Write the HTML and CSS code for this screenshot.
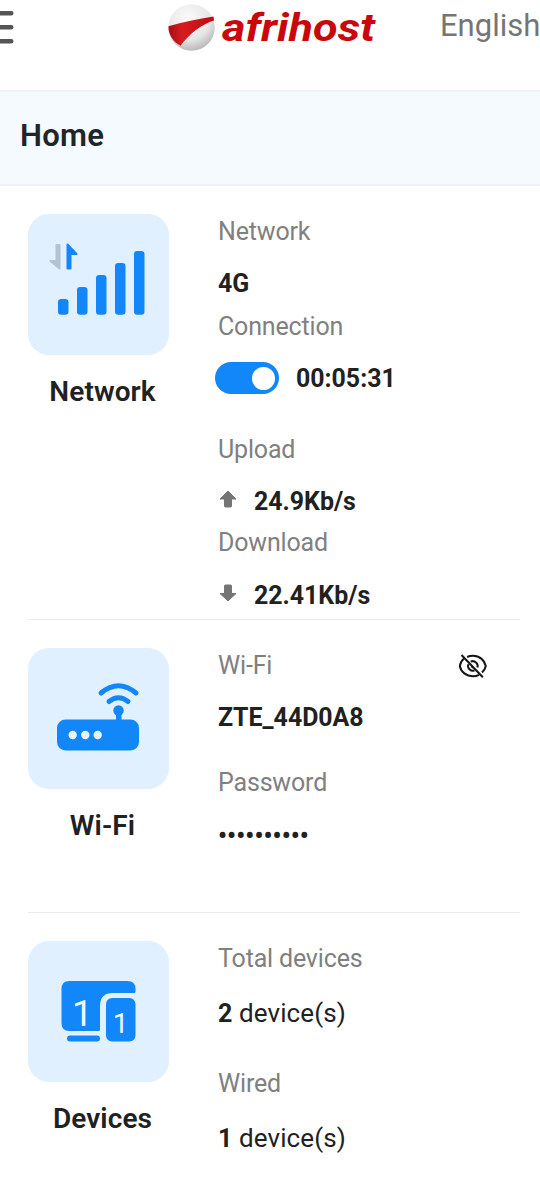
FILE: index.html
```html
<!DOCTYPE html>
<html lang="en">
<head>
<meta charset="utf-8">
<meta name="viewport" content="width=device-width">
<title>Home</title>
<link rel="stylesheet" href="styles.css">
</head>
<body>
<header class="topbar">
  <svg class="menu" width="14" height="50" viewBox="0 0 14 50"><path d="M-8 13.2H11.2M-8 27.2H11.2M-8 41.2H11.2" stroke="#555" stroke-width="4.6" stroke-linecap="round"/></svg>
  <svg class="logo" width="214" height="60" viewBox="0 0 214 60">
    <defs>
      <radialGradient id="ball" cx=".42" cy=".28" r=".75"><stop offset="0" stop-color="#fafafa"/><stop offset=".65" stop-color="#e6e6e6"/><stop offset="1" stop-color="#b5b5b5"/></radialGradient>
      <linearGradient id="band" x1="0" x2="1" y1="0" y2="0"><stop offset="0" stop-color="#a90d12"/><stop offset=".3" stop-color="#d51d20"/><stop offset="1" stop-color="#c00a10"/></linearGradient>
    </defs>
    <circle cx="25.5" cy="27.5" r="23.2" fill="url(#ball)"/>
    <path d="M2.500 26.300C17 22 32 19 47.500 16.500L48 20.500C36 24 24 33 14.500 45.700C7 42 2 34 2.500 26.300Z" fill="url(#band)"/>
    <text class="wordmark" x="56" y="41" textLength="153" lengthAdjust="spacingAndGlyphs">afrihost</text>
  </svg>
  <span class="language">English</span>
</header>
<h1 class="title">Home</h1>
<main>
  <section class="card network">
    <div class="side">
      <svg class="tile" viewBox="0 0 141 141" fill="#1287fa">
        <g stroke-linejoin="round" stroke-width="2">
          <path d="M28.500 31h3v23.500l-9-7.500h6z" fill="#b5c2cf" stroke="#b5c2cf"/>
          <path d="M42.500 54.500h-3V30.500l9 9.500h-6z" stroke="#1287fa"/>
        </g>
        <rect x="30" y="85" width="10.500" height="15.700" rx="3.300"/><rect x="49" y="73" width="10.500" height="27.700" rx="3.300"/><rect x="68" y="61" width="10.500" height="39.700" rx="3.300"/><rect x="87" y="49" width="10.500" height="51.700" rx="3.300"/><rect x="106" y="37" width="10.500" height="63.700" rx="3.300"/>
      </svg>
      <h2>Network</h2>
    </div>
    <dl>
      <dt>Network</dt><dd>4G</dd>
      <dt>Connection</dt><dd class="row"><span class="switch"><span class="knob"></span></span><span class="time">00:05:31</span></dd>
      <dt class="upload">Upload</dt><dd class="row"><svg class="arrow" width="18" height="20" viewBox="0 0 18 20"><path d="M9 2L17 10H12.500V17Q12.500 18 11.500 18H6.500Q5.500 18 5.500 17V10H1Z"/></svg><span>24.9Kb/s</span></dd>
      <dt class="download">Download</dt><dd class="row"><svg class="arrow" width="18" height="20" viewBox="0 0 18 20"><path d="M9 18L1 10.500H5.500V3Q5.500 2 6.500 2H11.500Q12.500 2 12.500 3V10.500H17Z"/></svg><span>22.41Kb/s</span></dd>
    </dl>
  </section>
  <section class="card wifi">
    <div class="side">
      <svg class="tile" viewBox="0 0 141 141" fill="#1287fa">
        <rect x="29" y="71.500" width="82" height="31" rx="8.500"/><circle cx="90.500" cy="62.500" r="5.200"/><path d="M88 65h5.500v9H88z"/>
        <path d="M73 45Q90.500 30.500 108 45M81 53.500Q90.500 46 100 53.500" fill="none" stroke="#1287fa" stroke-width="5" stroke-linecap="round"/>
        <g fill="#e8f5ff"><circle cx="44.700" cy="87" r="4.200"/><circle cx="57.300" cy="87" r="4.200"/><circle cx="69.700" cy="87" r="4.200"/></g>
      </svg>
      <h2>Wi-Fi</h2>
    </div>
    <dl>
      <dt class="between">Wi-Fi<svg class="eye" width="30" height="26" viewBox="0 0 30 26" fill="none" stroke="#151515" stroke-width="2"><path d="M9.200 4C11 3.100 13 2.800 15 2.800C21.500 2.800 26.500 7 27.800 13C27.200 15.800 25.800 18 24 19.600M6 5.600C3.700 7.500 2.200 10 1.800 13C3 19 8.300 23.200 15 23.200C17.200 23.200 19.200 22.700 21 21.800"/><path d="M12.700 8.600A5 5 0 0 1 19.500 14.500M10.300 11.300A5 5 0 0 0 16.500 17.600M3.500 2L24.800 24.200M14.200 12.200A1.200 1.200 0 0 0 15.800 14"/></svg></dt><dd>ZTE_44D0A8</dd>
      <dt class="password">Password</dt><dd class="dots">••••••••••</dd>
    </dl>
  </section>
  <section class="card devices">
    <div class="side">
      <svg class="tile" viewBox="0 0 141 141" fill="#1287fa">
        <path d="M41.500 40H99.500Q107.500 40 107.500 48V50.500Q107.500 52 106 52H85Q72 52 72 65V88.500Q72 90 70.500 90H41.500Q33.500 90 33.500 82V48Q33.500 40 41.500 40Z"/><rect x="39" y="94.500" width="33" height="6" rx="3"/><rect x="78" y="57" width="29.500" height="43.500" rx="6"/>
        <g class="count"><text x="44" y="84.500" font-size="37">1</text><text x="84.700" y="92" font-size="28">1</text></g>
      </svg>
      <h2>Devices</h2>
    </div>
    <dl>
      <dt>Total devices</dt><dd class="count-line"><b>2</b> device(s)</dd>
      <dt class="wired">Wired</dt><dd class="count-line"><b>1</b> device(s)</dd>
    </dl>
  </section>
</main>
</body>
</html>
```
FILE: styles.css
```css
* { box-sizing: border-box; }
body { margin: 0; height: 1199px; overflow: hidden; background: #fff; color: #212121; font-family: Roboto, "Liberation Sans", sans-serif; }
.topbar { display: flex; align-items: flex-start; height: 90px; overflow: hidden; }
.menu { flex: none; width: 14px; margin-right: 152px; }
.logo { flex: none; margin-right: 60px; }
.wordmark { fill: #c9080e; font: italic 700 39px Roboto, sans-serif; }
.language { padding-top: 7px; color: #757575; font-size: 31px; line-height: 38px; }
.title { display: flex; align-items: center; height: 96px; margin: 0; padding: 0 20px 4px; border-top: 2px solid #edf2fb; border-bottom: 2px solid #edf2fa; background: #f4faff; color: #20252a; font-size: 31px; line-height: 38px; font-weight: 600; letter-spacing: .3px; }
.card { display: flex; margin: 0 20px 0 28px; border-bottom: 1px solid #ebebeb; }
.network { height: 434px; padding-top: 28px; }
.wifi { height: 293px; padding-top: 28px; }
.devices { height: 286px; padding-top: 28px; border: 0; }
.side { display: flex; flex-direction: column; flex: none; width: 149px; }
.tile { width: 141px; height: 141px; border-radius: 21px; background: #e0f0ff; }
h2 { margin: 20px 0 0; font-size: 28px; line-height: 34px; font-weight: 600; text-align: center; letter-spacing: .1px; }
dl { flex: 1; margin: 4px 0 0 41px; }
dt, dd { margin: 0; height: 28px; line-height: 28px; white-space: nowrap; }
dt { color: #808080; font-size: 25px; letter-spacing: -.17px; }
dd { margin: 24px 0 15px; font-size: 24.9px; font-weight: 700; }
.row { display: flex; align-items: center; }
.switch { display: flex; justify-content: flex-end; align-items: center; width: 64px; height: 32px; margin: -2px 17px 0 -3px; padding-right: 4px; border-radius: 16px; background: #1287fa; }
.knob { width: 23px; height: 23px; border-radius: 50%; background: #fff; }
.upload { margin-top: 43px; }
.upload + dd { margin: 24px 0 13px; }
.download { margin-top: 13px; }
.download + dd { margin-top: 25px; }
.arrow { margin: -7px 17px 0 1px; fill: #757575; stroke: #757575; stroke-linejoin: round; }
.between { display: flex; justify-content: space-between; align-items: center; }
.eye { margin-right: 32px; }
.password { margin-top: 37px; }
.dots { margin-top: 25px; letter-spacing: .15px; }
.devices dl { margin-top: 4px; }
.count-line { margin-top: 26px; font-size: 26px; font-weight: 400; letter-spacing: .1px; }
.count-line b { font-size: 25px; }
.wired { margin-top: 43px; }
.wired + .count-line { margin-top: 26px; }
.count { fill: #edf7ff; font-family: Roboto, sans-serif; }
```
